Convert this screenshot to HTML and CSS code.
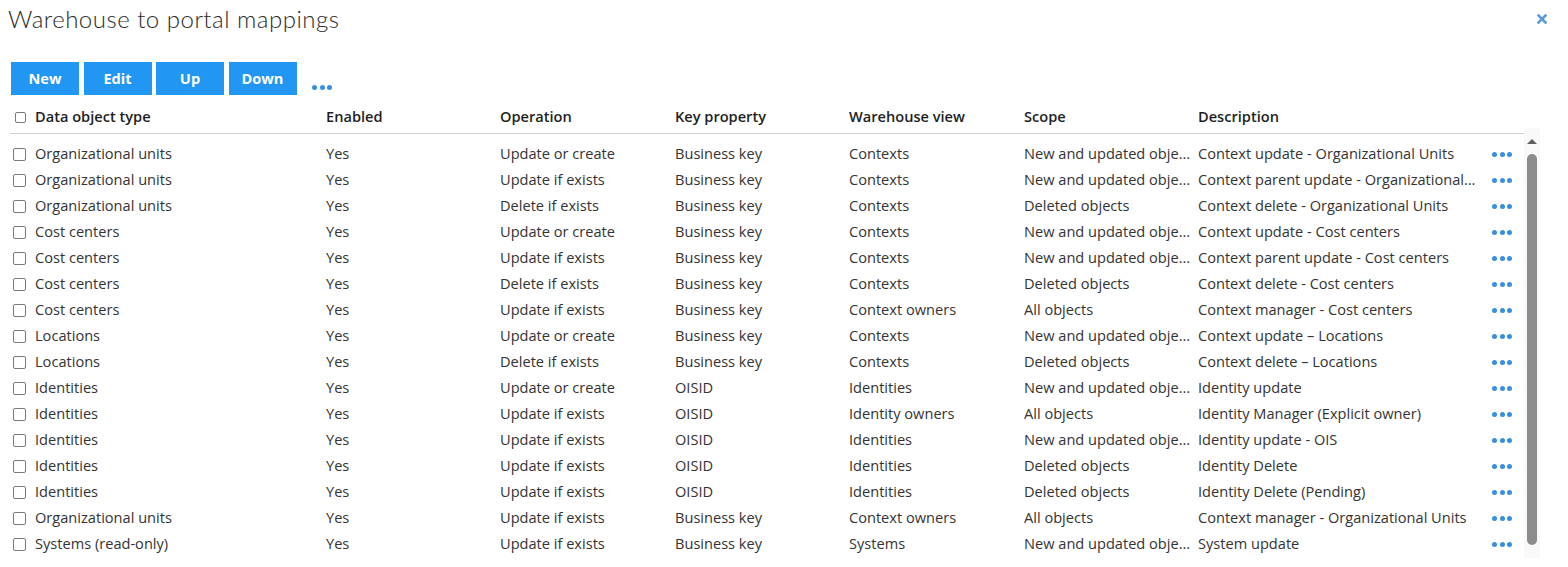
FILE: index.html
```html
<!DOCTYPE html>
<html>
<head>
<meta charset="utf-8">
<link rel="stylesheet" href="styles.css">
</head>
<body>
<div class="page">
  <div class="titlebar">
    <h1 class="title">Warehouse to portal mappings</h1>
    <span class="close">
      <svg width="10" height="10" viewBox="0 0 10 10"><path d="M1.5 1.5 L8.5 8.5 M8.5 1.5 L1.5 8.5" stroke="#5a9bd8" stroke-width="2.6" stroke-linecap="square"/></svg>
    </span>
  </div>
  <div class="toolbar">
    <button class="btn">New</button>
    <button class="btn">Edit</button>
    <button class="btn">Up</button>
    <button class="btn">Down</button>
    <span class="dots toolbar-dots"><i></i><i></i><i></i></span>
  </div>
  <div class="grid">
    <div class="tablewrap">
      <table class="head">
        <colgroup><col class="c1"><col class="c2"><col class="c3"><col class="c4"><col class="c5"><col class="c6"><col class="c7"><col class="c8"></colgroup>
        <tr>
          <th><span class="cb cb-small"></span>Data object type</th>
          <th>Enabled</th>
          <th>Operation</th>
          <th>Key property</th>
          <th>Warehouse view</th>
          <th>Scope</th>
          <th>Description</th>
          <th></th>
        </tr>
      </table>
      <table class="body">
        <colgroup><col class="c1"><col class="c2"><col class="c3"><col class="c4"><col class="c5"><col class="c6"><col class="c7"><col class="c8"></colgroup>
        <tr><td><span class="cb"></span>Organizational units</td><td>Yes</td><td>Update or create</td><td>Business key</td><td>Contexts</td><td>New and updated objects</td><td>Context update - Organizational Units</td><td><span class="dots row-dots"><i></i><i></i><i></i></span></td></tr>
        <tr><td><span class="cb"></span>Organizational units</td><td>Yes</td><td>Update if exists</td><td>Business key</td><td>Contexts</td><td>New and updated objects</td><td>Context parent update - Organizational Units</td><td><span class="dots row-dots"><i></i><i></i><i></i></span></td></tr>
        <tr><td><span class="cb"></span>Organizational units</td><td>Yes</td><td>Delete if exists</td><td>Business key</td><td>Contexts</td><td>Deleted objects</td><td>Context delete - Organizational Units</td><td><span class="dots row-dots"><i></i><i></i><i></i></span></td></tr>
        <tr><td><span class="cb"></span>Cost centers</td><td>Yes</td><td>Update or create</td><td>Business key</td><td>Contexts</td><td>New and updated objects</td><td>Context update - Cost centers</td><td><span class="dots row-dots"><i></i><i></i><i></i></span></td></tr>
        <tr><td><span class="cb"></span>Cost centers</td><td>Yes</td><td>Update if exists</td><td>Business key</td><td>Contexts</td><td>New and updated objects</td><td>Context parent update - Cost centers</td><td><span class="dots row-dots"><i></i><i></i><i></i></span></td></tr>
        <tr><td><span class="cb"></span>Cost centers</td><td>Yes</td><td>Delete if exists</td><td>Business key</td><td>Contexts</td><td>Deleted objects</td><td>Context delete - Cost centers</td><td><span class="dots row-dots"><i></i><i></i><i></i></span></td></tr>
        <tr><td><span class="cb"></span>Cost centers</td><td>Yes</td><td>Update if exists</td><td>Business key</td><td>Context owners</td><td>All objects</td><td>Context manager - Cost centers</td><td><span class="dots row-dots"><i></i><i></i><i></i></span></td></tr>
        <tr><td><span class="cb"></span>Locations</td><td>Yes</td><td>Update or create</td><td>Business key</td><td>Contexts</td><td>New and updated objects</td><td>Context update – Locations</td><td><span class="dots row-dots"><i></i><i></i><i></i></span></td></tr>
        <tr><td><span class="cb"></span>Locations</td><td>Yes</td><td>Delete if exists</td><td>Business key</td><td>Contexts</td><td>Deleted objects</td><td>Context delete – Locations</td><td><span class="dots row-dots"><i></i><i></i><i></i></span></td></tr>
        <tr><td><span class="cb"></span>Identities</td><td>Yes</td><td>Update or create</td><td>OISID</td><td>Identities</td><td>New and updated objects</td><td>Identity update</td><td><span class="dots row-dots"><i></i><i></i><i></i></span></td></tr>
        <tr><td><span class="cb"></span>Identities</td><td>Yes</td><td>Update if exists</td><td>OISID</td><td>Identity owners</td><td>All objects</td><td>Identity Manager (Explicit owner)</td><td><span class="dots row-dots"><i></i><i></i><i></i></span></td></tr>
        <tr><td><span class="cb"></span>Identities</td><td>Yes</td><td>Update if exists</td><td>OISID</td><td>Identities</td><td>New and updated objects</td><td>Identity update - OIS</td><td><span class="dots row-dots"><i></i><i></i><i></i></span></td></tr>
        <tr><td><span class="cb"></span>Identities</td><td>Yes</td><td>Update if exists</td><td>OISID</td><td>Identities</td><td>Deleted objects</td><td>Identity Delete</td><td><span class="dots row-dots"><i></i><i></i><i></i></span></td></tr>
        <tr><td><span class="cb"></span>Identities</td><td>Yes</td><td>Update if exists</td><td>OISID</td><td>Identities</td><td>Deleted objects</td><td>Identity Delete (Pending)</td><td><span class="dots row-dots"><i></i><i></i><i></i></span></td></tr>
        <tr><td><span class="cb"></span>Organizational units</td><td>Yes</td><td>Update if exists</td><td>Business key</td><td>Context owners</td><td>All objects</td><td>Context manager - Organizational Units</td><td><span class="dots row-dots"><i></i><i></i><i></i></span></td></tr>
        <tr><td><span class="cb"></span>Systems (read-only)</td><td>Yes</td><td>Update if exists</td><td>Business key</td><td>Systems</td><td>New and updated objects</td><td>System update</td><td><span class="dots row-dots"><i></i><i></i><i></i></span></td></tr>
      </table>
    </div>
    <div class="scrollbar">
      <span class="arrow"></span>
      <span class="thumb"></span>
    </div>
  </div>
</div>
</body>
</html>
```

FILE: styles.css
```css
* { box-sizing: border-box; }
html, body { margin: 0; padding: 0; background: #fff; }
body {
  font-family: "Open Sans", "Liberation Sans", sans-serif;
  font-size: 14.6px;
  color: #333;
}
.page {
  width: 1568px;
  height: 567px;
  overflow: hidden;
  padding: 0 28px 0 10px;
}
.titlebar {
  display: flex;
  justify-content: space-between;
  align-items: flex-start;
  height: 62px;
  margin-left: -2px;
  margin-right: -7px;
}
.title {
  margin: 3px 0 0 0;
  font-family: Lato, "Open Sans", sans-serif;
  font-weight: 300;
  font-size: 24px;
  line-height: 32px;
  color: #2a2a2a;
  letter-spacing: 0.5px;
}
.close {
  display: block;
  margin-top: 14px;
  width: 10px;
  height: 10px;
}
.close svg { display: block; }
.toolbar {
  display: flex;
  align-items: center;
  gap: 4.5px;
  height: 33px;
  margin-left: 1px;
}
.btn {
  width: 68px;
  height: 33px;
  border: none;
  background: #2196f3;
  color: #fff;
  font-family: "Open Sans", sans-serif;
  font-weight: 700;
  font-size: 14.6px;
  line-height: 32px;
  padding: 0 0 1px 0;
  border-radius: 0;
}
.dots {
  display: inline-flex;
  gap: 2.5px;
  align-items: center;
}
.dots i {
  display: block;
  width: 5px;
  height: 5px;
  border-radius: 50%;
  background: #3a8ee0;
}
.row-dots {
  display: flex;
  height: 26px;
  padding-top: 4px;
}
.toolbar-dots {
  margin-left: 11px;
  margin-top: 17px;
}
.grid {
  display: flex;
  margin-top: 6px;
}
.tablewrap {
  width: 1514px;
}
table {
  width: 1514px;
  border-collapse: collapse;
  table-layout: fixed;
}
col.c1 { width: 316px; }
col.c2 { width: 174px; }
col.c3 { width: 175px; }
col.c4 { width: 174px; }
col.c5 { width: 175px; }
col.c6 { width: 174px; }
col.c7 { width: 287px; }
col.c8 { width: 39px; }
th {
  height: 32px;
  text-align: left;
  font-weight: 600;
  color: #1e1e1e;
  padding: 0 5px 2px 0;
  white-space: nowrap;
  border-bottom: 1px solid #cfcfcf;
  vertical-align: middle;
}
table.head th:first-child { padding-left: 5px; }
table.body { margin-top: 6px; }
td {
  height: 26px;
  padding: 0 6px 0 0;
  white-space: nowrap;
  overflow: hidden;
  text-overflow: ellipsis;
  vertical-align: middle;
  color: #333;
}
td:first-child { padding-left: 3px; }
td:last-child { padding-left: 7px; text-overflow: clip; }
.cb {
  display: inline-block;
  width: 13px;
  height: 13px;
  border: 1px solid #7a7a7a;
  border-radius: 2px;
  vertical-align: -2px;
  margin-right: 9px;
  background: #fff;
}
.cb-small {
  width: 11px;
  height: 11px;
  margin-right: 9px;
  vertical-align: -1px;
}
.scrollbar {
  width: 16px;
  height: 430px;
  margin-top: 27px;
  background: #f9f9f9;
  display: flex;
  flex-direction: column;
  align-items: center;
}
.arrow {
  margin-top: 11px;
  width: 0;
  height: 0;
  border-left: 5px solid transparent;
  border-right: 5px solid transparent;
  border-bottom: 5px solid #5f5f5f;
}
.thumb {
  margin-top: 10px;
  width: 10px;
  height: 391px;
  border-radius: 5px;
  background: #8c8c8c;
}
```
